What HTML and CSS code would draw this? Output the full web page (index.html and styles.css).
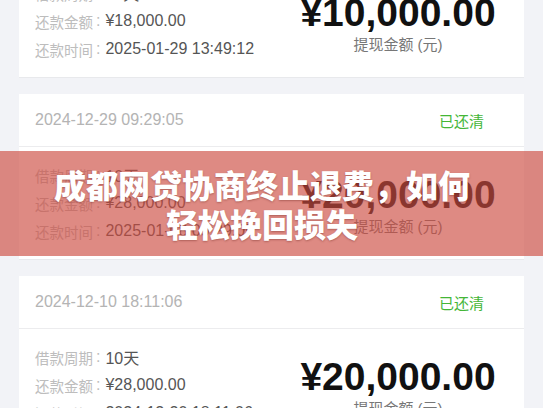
FILE: index.html
```html
<!DOCTYPE html>
<html lang="zh-CN">
<head>
  <meta charset="UTF-8">
  <title>成都网贷协商终止退费，如何轻松挽回损失</title>
  <link rel="stylesheet" href="styles.css">
</head>
<body>
  <div class="record-list">
    <!-- 账单记录 -->
    <div class="card">
      <div class="card-head">
        <span class="date">2025-01-18 10:42:31</span>
        <span class="status">已还清</span>
      </div>
      <div class="card-body">
        <div class="rows">
          <div class="row"><span class="label">借款周期</span><span class="colon">:</span><span class="value">10天</span></div>
          <div class="row"><span class="label">还款金额</span><span class="colon">:</span><span class="value">¥18,000.00</span></div>
          <div class="row"><span class="label">还款时间</span><span class="colon">:</span><span class="value">2025-01-29 13:49:12</span></div>
        </div>
        <div class="amount">
          <div class="amount-num">¥10,000.00</div>
          <div class="amount-cap">提现金额 (元)</div>
        </div>
      </div>
    </div>

    <div class="card">
      <div class="card-head">
        <span class="date">2024-12-29 09:29:05</span>
        <span class="status">已还清</span>
      </div>
      <div class="card-body">
        <div class="rows">
          <div class="row"><span class="label">借款周期</span><span class="colon">:</span><span class="value">10天</span></div>
          <div class="row"><span class="label">还款金额</span><span class="colon">:</span><span class="value">¥28,000.00</span></div>
          <div class="row"><span class="label">还款时间</span><span class="colon">:</span><span class="value">2025-01-08 09:29:05</span></div>
        </div>
        <div class="amount">
          <div class="amount-num">¥20,000.00</div>
          <div class="amount-cap">提现金额 (元)</div>
        </div>
      </div>
    </div>

    <div class="card">
      <div class="card-head">
        <span class="date">2024-12-10 18:11:06</span>
        <span class="status">已还清</span>
      </div>
      <div class="card-body">
        <div class="rows">
          <div class="row"><span class="label">借款周期</span><span class="colon">:</span><span class="value">10天</span></div>
          <div class="row"><span class="label">还款金额</span><span class="colon">:</span><span class="value">¥28,000.00</span></div>
          <div class="row"><span class="label">还款时间</span><span class="colon">:</span><span class="value">2024-12-20 18:11:06</span></div>
        </div>
        <div class="amount">
          <div class="amount-num">¥20,000.00</div>
          <div class="amount-cap">提现金额 (元)</div>
        </div>
      </div>
    </div>
  </div>

  <!-- 标题横幅，盖在列表上 -->
  <div class="banner">
    <h1 class="banner-title">成都网贷协商终止退费，如何轻松挽回损失</h1>
  </div>
</body>
</html>
```

FILE: styles.css
```css
body {
  margin: 0;
  height: 408px;
  overflow: hidden;
  position: relative;
  background: #f2f3f7;
  font-family: "Liberation Sans", "Noto Sans CJK SC", sans-serif;
}

/* 列表已滚动过一段，第一张卡片只露出下半部分 */
.record-list {
  display: flex;
  flex-direction: column;
  gap: 16px;
  margin-top: -88px;
  padding: 0 19px;
}

.card {
  background: #fff;
  border-bottom: 1px solid #e8e9ec;
}

.card-head {
  height: 52px;
  display: flex;
  align-items: center;
  justify-content: space-between;
  padding: 0 40px 0 16px;
  border-bottom: 1px solid #ececee;
}

.date {
  font-size: 16px;
  color: #b4b4b4;
}

.status {
  font-size: 15px;
  color: #44b637;
}

.card-body {
  height: 112px;
  display: flex;
  align-items: center;
  justify-content: space-between;
  padding: 0 26px 0 16px;
}

.rows {
  display: flex;
  flex-direction: column;
}

.row {
  height: 28px;
  display: flex;
  align-items: center;
  font-size: 16px;
}

.label {
  font-size: 14.5px;
  color: #bdbdbd;
}

.colon {
  color: #bdbdbd;
  margin: 0 5px 0 3px;
}

.value {
  color: #555;
}

.amount {
  width: 200px;
  text-align: center;
  margin-top: 4px;
}

.amount-num {
  font-size: 39px;
  line-height: 44px;
  font-weight: bold;
  color: #111;
}

.amount-cap {
  font-size: 15px;
  line-height: 20px;
  color: #777;
}

/* 半透明红色横幅 */
.banner {
  position: absolute;
  top: 151px;
  left: 0;
  right: 0;
  height: 105px;
  display: flex;
  align-items: center;
  padding: 0 66px 0 47px;
  background: rgba(205, 75, 65, 0.65);
}

.banner-title {
  margin: 0;
  width: 100%;
  text-align: center;
  font-family: "Noto Sans CJK SC", sans-serif;
  font-size: 32px;
  line-height: 39px;
  font-weight: 900;
  color: #fff;
  text-shadow: 0 1px 2px rgba(90, 20, 15, 0.35);
}
```
